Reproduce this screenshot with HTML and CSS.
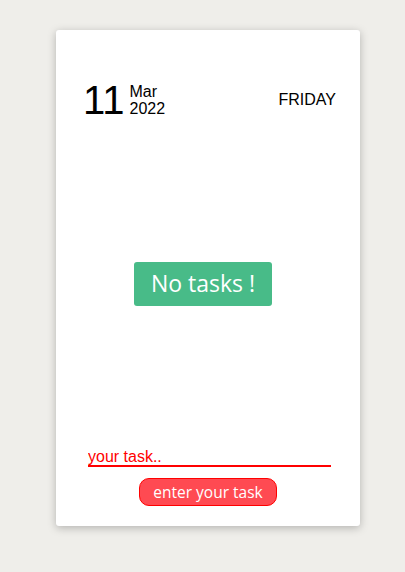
FILE: index.html
```html
<!DOCTYPE html>
<html>
<head>
<meta charset="utf-8">
<link rel="stylesheet" href="styles.css">
</head>
<body>
<div class="card">
  <div class="header">
    <div class="date">
      <span class="day">11</span>
      <div class="monthyear">
        <span>Mar</span>
        <span>2022</span>
      </div>
    </div>
    <div class="weekday">FRIDAY</div>
  </div>
  <div class="middle">
    <div class="empty">No tasks !</div>
  </div>
  <div class="form">
    <input class="task-input" type="text" placeholder="your task.." autofocus>
    <button class="add-btn">enter your task</button>
  </div>
</div>
</body>
</html>
```

FILE: styles.css
```css
html, body {
  margin: 0;
  padding: 0;
}
body {
  background: #efeeea;
  width: 405px;
  height: 572px;
  font-family: "Liberation Sans", Arial, sans-serif;
}
.card {
  position: relative;
  margin: 30px 0 0 56px;
  width: 304px;
  height: 496px;
  background: #fff;
  border-radius: 3px;
  box-shadow: 0 2px 8px rgba(0,0,0,0.25);
  display: flex;
  flex-direction: column;
  box-sizing: border-box;
  padding: 50px 24px 20px 27px;
}
.header {
  display: flex;
  justify-content: space-between;
  align-items: center;
}
.date {
  display: flex;
  align-items: center;
  gap: 5px;
}
.day {
  font-size: 40px;
  line-height: 40px;
  color: #000;
}
.monthyear {
  display: flex;
  flex-direction: column;
  font-size: 16px;
  line-height: 17px;
  color: #000;
}
.weekday {
  font-size: 16px;
  color: #000;
}
.middle {
  flex: 1;
  display: flex;
  align-items: center;
  justify-content: center;
}
.empty {
  background: #48bb88;
  color: #fff;
  font-family: "Open Sans", sans-serif;
  font-size: 23px;
  width: 138px;
  height: 44px;
  line-height: 42px;
  text-align: center;
  border-radius: 3px;
  margin-right: 13px;
  margin-bottom: 1px;
}
.form {
  display: flex;
  flex-direction: column;
  align-items: center;
  gap: 11px;
}
.task-input {
  align-self: flex-start;
  width: 243px;
  margin-left: 5px;
  box-sizing: border-box;
  border: none;
  border-bottom: 2px solid #f00;
  outline: none;
  padding: 0;
  font-family: "Liberation Sans", Arial, sans-serif;
  font-size: 16px;
  height: 19px;
  color: #f00;
  caret-color: #000;
  background: transparent;
}
.task-input::placeholder {
  color: #f00;
  opacity: 1;
}
.add-btn {
  width: 138px;
  height: 28px;
  background: #ff4a52;
  border: 1px solid #f00;
  border-radius: 10px;
  color: #fff;
  font-family: "Open Sans", sans-serif;
  font-size: 15.5px;
  padding: 0;
  margin-right: 3px;
}
```
